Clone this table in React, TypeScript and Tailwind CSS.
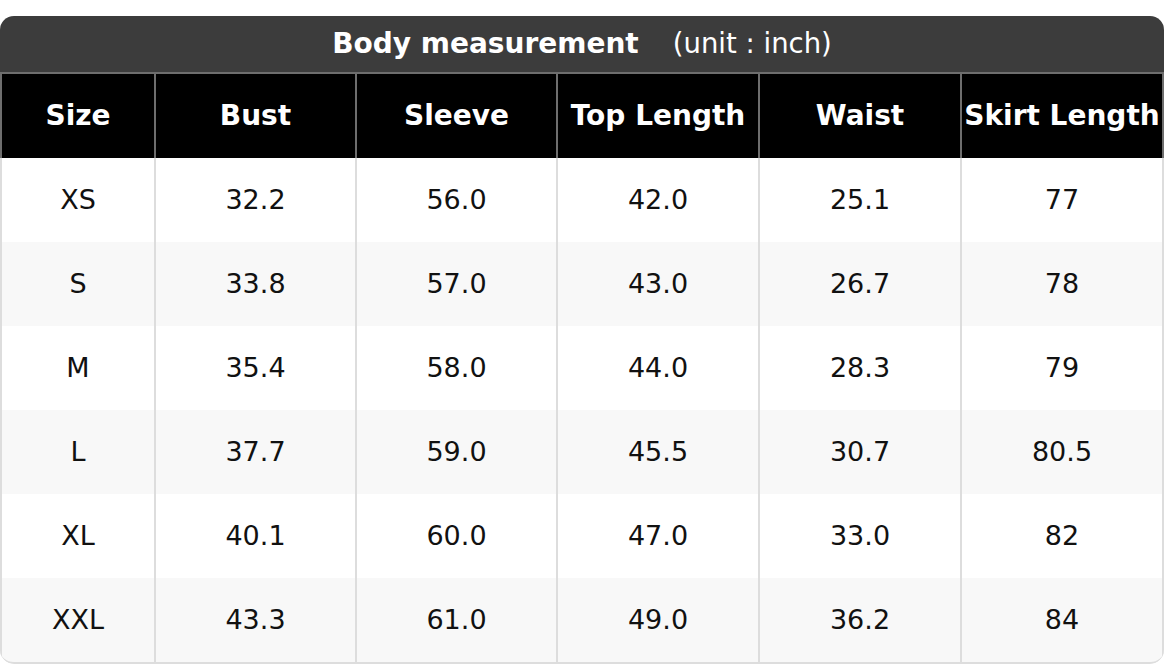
import React from "react";

const rows = [
  ["XS", "32.2", "56.0", "42.0", "25.1", "77"],
  ["S", "33.8", "57.0", "43.0", "26.7", "78"],
  ["M", "35.4", "58.0", "44.0", "28.3", "79"],
  ["L", "37.7", "59.0", "45.5", "30.7", "80.5"],
  ["XL", "40.1", "60.0", "47.0", "33.0", "82"],
  ["XXL", "43.3", "61.0", "49.0", "36.2", "84"],
];

const headers = ["Size", "Bust", "Sleeve", "Top Length", "Waist", "Skirt Length"];

const gridCols = "grid grid-cols-[154px_201px_201px_202px_202px_204px]";

export default function App() {
  return (
    <div
      className="w-[1164px] h-[664px] bg-white pt-[16px] overflow-hidden"
      style={{ fontFamily: '"DejaVu Sans", "Liberation Sans", sans-serif' }}
    >
      <div className="rounded-[14px] overflow-hidden">
        <div className="h-[56px] bg-[#3c3c3c] flex items-center justify-center gap-[34px] text-white leading-none">
          <span className="font-bold text-[28px]">Body measurement</span>
          <span className="text-[27.5px]">(unit : inch)</span>
        </div>
        <div className={`${gridCols} bg-black border-t-2 border-[#6e6e6e] h-[86px]`}>
          {headers.map((h, i) => (
            <div
              key={h}
              className={`flex items-center justify-center border-l-2 border-[#6e6e6e] text-white font-bold text-[28px] whitespace-nowrap ${
                i === 5 ? "border-r-2" : ""
              }`}
            >
              {h}
            </div>
          ))}
        </div>
        {rows.map((r, ri) => (
          <div
            key={r[0]}
            className={`${gridCols} ${ri % 2 === 1 ? "bg-[#f8f8f8]" : "bg-white"} ${
              ri === rows.length - 1 ? "h-[86px] border-b-2 border-[#dddddd] rounded-b-[14px]" : "h-[84px]"
            }`}
          >
            {r.map((c, ci) => (
              <div
                key={ci}
                className={`flex items-center justify-center border-l-2 border-[#dddddd] text-[#111111] text-[27px] ${
                  ci === 5 ? "border-r-2" : ""
                }`}
              >
                {c}
              </div>
            ))}
          </div>
        ))}
      </div>
    </div>
  );
}
